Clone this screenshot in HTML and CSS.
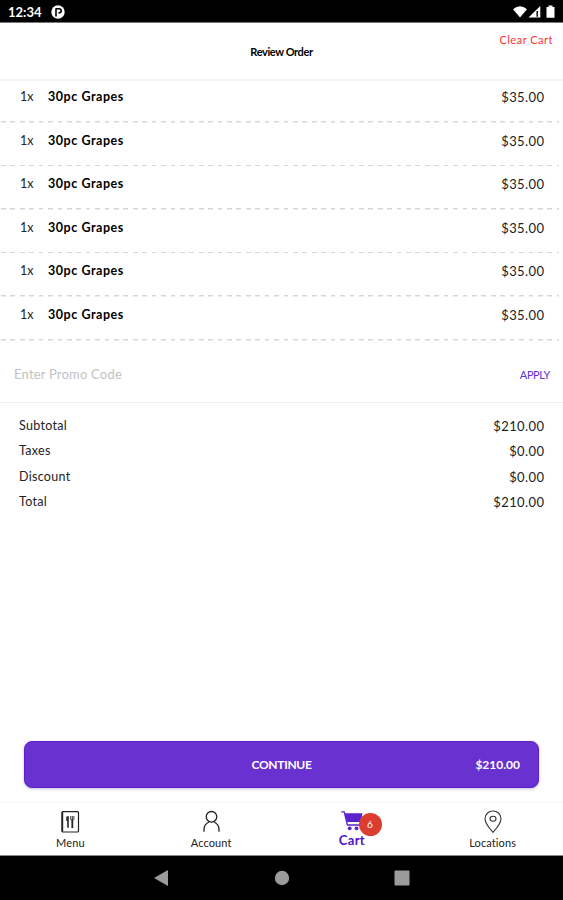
FILE: index.html
```html
<!DOCTYPE html>
<html lang="en">
<head>
    <meta charset="UTF-8">
    <meta name="viewport" content="width=device-width, initial-scale=1.0">
    <title>Review Order</title>
    <link rel="stylesheet" href="styles.css">
</head>
<body>
    <!-- Android status bar -->
    <div class="status-bar">
        <span class="clock">12:34</span>
        <svg class="status-app" width="14" height="14" viewBox="0 0 14 14">
            <circle cx="7" cy="7" r="6.7" fill="#fff"/>
            <path d="M5 11.5V3.2M5 3.7h3.2a1.7 1.7 0 0 1 0 4H7.4" fill="none" stroke="#000" stroke-width="1.6"/>
        </svg>
        <svg class="status-icons" width="44" height="14" viewBox="0 0 44 14">
            <path d="M1 4.2Q8 -1.6 15 4.2L8 12.6z" fill="#fff"/>
            <path d="M16.5 12.5L28.3 1v11.5z" fill="#fff"/>
            <path d="M25.2 6v5.8" stroke="#000" stroke-width="1.4"/>
            <path d="M34.5 2h2V.5h4V2h2v10.8h-8z" fill="#fff"/>
        </svg>
    </div>

    <header class="header">
        <h1 class="title">Review Order</h1>
        <a class="clear-cart">Clear Cart</a>
    </header>

    <main class="content">
        <ul class="items">
            <li class="item"><span class="qty">1x</span><span class="name">30pc Grapes</span><span class="price">$35.00</span></li>
            <li class="item"><span class="qty">1x</span><span class="name">30pc Grapes</span><span class="price">$35.00</span></li>
            <li class="item"><span class="qty">1x</span><span class="name">30pc Grapes</span><span class="price">$35.00</span></li>
            <li class="item"><span class="qty">1x</span><span class="name">30pc Grapes</span><span class="price">$35.00</span></li>
            <li class="item"><span class="qty">1x</span><span class="name">30pc Grapes</span><span class="price">$35.00</span></li>
            <li class="item"><span class="qty">1x</span><span class="name">30pc Grapes</span><span class="price">$35.00</span></li>
        </ul>

        <div class="promo">
            <span class="promo-input">Enter Promo Code</span>
            <span class="apply">APPLY</span>
        </div>

        <div class="totals">
            <div class="total-row"><span>Subtotal</span><span class="price">$210.00</span></div>
            <div class="total-row"><span>Taxes</span><span class="price">$0.00</span></div>
            <div class="total-row"><span>Discount</span><span class="price">$0.00</span></div>
            <div class="total-row"><span>Total</span><span class="price">$210.00</span></div>
        </div>
    </main>

    <button class="continue">
        <span class="continue-label">CONTINUE</span>
        <span class="continue-price">$210.00</span>
    </button>

    <!-- Bottom tabs -->
    <nav class="tabs">
        <a class="tab">
            <svg width="20" height="24" viewBox="0 0 20 24" fill="none" stroke="#222">
                <rect x="2" y="1.7" width="16.5" height="20.3" rx="1" stroke-width="1.2"/>
                <path d="M2.4 2v19.6" stroke-width="1.6"/>
                <path d="M8 6.2v11.6" stroke-width="1.6"/>
                <path d="M7 6.5v4.5" stroke-width="1.4"/>
                <path d="M12.3 10v8" stroke-width="1.8"/>
                <path d="M10.7 6v3.4q1.6 1.6 3.2 0V6M12.3 6v4" stroke-width=".9"/>
            </svg>
            <span class="tab-label">Menu</span>
        </a>
        <a class="tab">
            <svg width="20" height="24" viewBox="0 0 20 24" fill="none" stroke="#222" stroke-width="1.3">
                <circle cx="10.5" cy="6.800" r="5.3"/>
                <path d="M3 21.800v-2.300q0-5.300 5-7.500M18 21.800v-2.300q0-5.300-5-7.500"/>
            </svg>
            <span class="tab-label">Account</span>
        </a>
        <a class="tab active">
            <svg width="24" height="24" viewBox="0 0 24 24">
                <path d="M1.2 1.800h3L7.400 15h13" fill="none" stroke="#5b23cd" stroke-width="1.300"/>
                <path d="M4.600 3.200H22.500L20.700 12H6.800z" fill="#5b23cd"/>
                <circle cx="9.700" cy="18.300" r="1.900" fill="#5b23cd"/>
                <circle cx="16.500" cy="18.300" r="1.900" fill="#5b23cd"/>
            </svg>
            <span class="badge">6</span>
            <span class="tab-label">Cart</span>
        </a>
        <a class="tab">
            <svg width="20" height="24" viewBox="0 0 20 24" fill="none" stroke="#333" stroke-width="1.1">
                <path d="M10 22.3Q2 13.5 2 8.7a8 7.700 0 0 1 16 0Q18 13.500 10 22.300z"/>
                <ellipse cx="10" cy="8.800" rx="3" ry="2.500"/>
            </svg>
            <span class="tab-label">Locations</span>
        </a>
    </nav>

    <!-- Android navigation bar -->
    <div class="nav-bar">
        <svg width="16" height="16" viewBox="0 0 16 16"><path d="M14 0v16L0 8z" fill="#9b9b9b"/></svg>
        <svg width="16" height="16" viewBox="0 0 16 16"><circle cx="8" cy="8" r="7.2" fill="#9b9b9b"/></svg>
        <svg width="16" height="16" viewBox="0 0 16 16"><rect x=".5" y=".5" width="15" height="15" rx="1" fill="#9b9b9b"/></svg>
    </div>
</body>
</html>
```
FILE: styles.css
```css
* {
    box-sizing: border-box;
}
body {
    display: flex;
    flex-direction: column;
    height: 900px;
    margin: 0;
    overflow: hidden;
    background-color: #fff;
    color: #222;
    font-family: Lato, "Liberation Sans", sans-serif;
    font-size: 13px;
}

.status-bar {
    display: flex;
    align-items: center;
    height: 23px;
    padding: 1px 7px 0 8px;
    background-color: #000;
    border-bottom: 1px solid #777;
    color: #fff;
}
.clock {
    width: 43px;
    font-weight: bold;
}
.status-icons {
    margin-left: auto;
}

.header {
    display: grid;
    grid-template-columns: 1fr auto 1fr;
    height: 56px;
    padding: 0 10px;
    box-shadow: 0 2px 0 #f5f5f5;
}
.title {
    grid-column: 2;
    margin: 0;
    color: #000;
    font-size: 11px;
    font-weight: bold;
    letter-spacing: -0.4px;
    line-height: 57px;
}
.clear-cart {
    justify-self: end;
    color: #f33;
    font-size: 11px;
    letter-spacing: 0.5px;
    line-height: 34px;
}

.items {
    margin: 0;
    padding: 0;
    list-style: none;
}
.item {
    display: flex;
    height: 43.6px;
    padding: 0 19px 0 20px;
    /* dashed divider */
    background: repeating-linear-gradient(to right, #d6d6d6 0 4.7px, transparent 4.7px 9.42px) 1px 100% / 558px 1.5px no-repeat;
    line-height: 36px;
}
.qty {
    width: 28px;
    font-size: 12.5px;
}
.name {
    flex: 1;
    color: #000;
    font-size: 12.5px;
    font-weight: bold;
    letter-spacing: 0.55px;
}
.price {
    margin-right: -0.4px;
    letter-spacing: 0.4px;
}

.promo {
    display: flex;
    align-items: center;
    justify-content: space-between;
    height: 62px;
    padding: 6px 13px 0 14px;
    border-bottom: 1px solid #f1f1f1;
}
.promo-input {
    color: #c2c2c2;
    letter-spacing: 0.2px;
}
.apply {
    color: #5b35cd;
    font-size: 11px;
    letter-spacing: -0.4px;
}

.totals {
    padding: 10.5px 19px 0;
}
.total-row {
    display: flex;
    justify-content: space-between;
    height: 25.3px;
    font-size: 12.5px;
    letter-spacing: 0.3px;
    line-height: 26px;
}
.total-row .price {
    font-size: 13px;
}

.continue {
    display: grid;
    grid-template-columns: 1fr auto 1fr;
    align-items: center;
    height: 47px;
    margin: auto 24px 14px;
    padding: 0 18px;
    background-color: #6831d0;
    border: 1px solid #5c20ca;
    border-radius: 8px;
    box-shadow: 0 1px 3px rgba(60, 40, 140, 0.3);
    color: #fff;
    font-family: inherit;
    font-size: 12px;
    font-weight: bold;
}
.continue-label {
    grid-column: 2;
    letter-spacing: -0.3px;
}
.continue-price {
    justify-self: end;
}

.tabs {
    display: flex;
    height: 53px;
    border-top: 1px solid #f8f8f8;
}
.tab {
    position: relative;
    display: flex;
    flex: 1;
    flex-direction: column;
    align-items: center;
    padding-top: 7px;
}
.tab-label {
    font-size: 11px;
    letter-spacing: 0.1px;
    line-height: 17px;
}
.active .tab-label {
    margin-top: -2px;
    color: #4d12c4;
    font-size: 13px;
    font-weight: bold;
    letter-spacing: 0.3px;
}
.badge {
    position: absolute;
    top: 10px;
    left: 77px;
    width: 23px;
    height: 23px;
    border-radius: 50%;
    background-color: #db3d30;
    color: #fff;
    font-size: 10px;
    line-height: 23px;
    text-align: center;
}

.nav-bar {
    display: flex;
    align-items: center;
    justify-content: center;
    gap: 104px;
    height: 45px;
    background-color: #000;
    border-top: 1px solid #888;
}
```
